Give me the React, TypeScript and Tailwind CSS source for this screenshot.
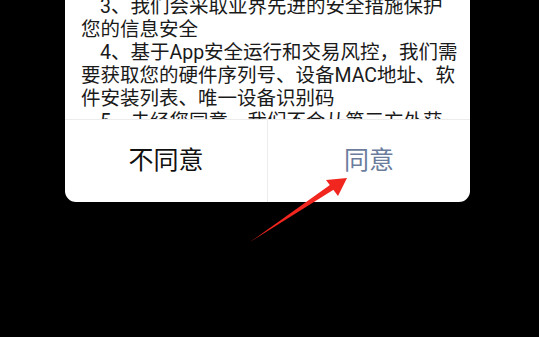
import React from 'react';

const lines: { text: string; indent?: boolean }[] = [
  { text: '3、我们会采取业界先进的安全措施保护', indent: true },
  { text: '您的信息安全' },
  { text: '4、基于App安全运行和交易风控，我们需', indent: true },
  { text: '要获取您的硬件序列号、设备MAC地址、软' },
  { text: '件安装列表、唯一设备识别码' },
  { text: '5、未经您同意，我们不会从第三方外获', indent: true },
];

const App: React.FC = () => {
  return (
    <div
      className="relative w-[539px] h-[337px] bg-black overflow-hidden"
      style={{ fontFamily: "Roboto, 'Noto Sans CJK SC', sans-serif" }}
    >
      {/* Dialog */}
      <div className="ml-[65px] w-[405px] bg-white rounded-b-[11px] overflow-hidden">
        {/* Scrolled agreement text */}
        <div className="h-[119px] overflow-hidden pl-[16px] pr-[14px]">
          <div className="-mt-[5px] text-[19.5px] leading-[23px] text-[#1a1a1a]">
            {lines.map((l, i) => (
              <div key={i} className={`whitespace-nowrap ${l.indent ? 'pl-[19px]' : ''}`}>
                {l.text}
              </div>
            ))}
          </div>
        </div>

        {/* Buttons */}
        <div className="flex h-[83px] border-t border-[#ececec]">
          <button className="flex-1 flex items-center justify-center text-[25px] text-[#111] pb-[1px]">
            不同意
          </button>
          <div className="w-px bg-[#ececec]" />
          <button className="flex-1 flex items-center justify-center text-[25px] text-[#6b7c9c] pb-[1px]">
            同意
          </button>
        </div>
      </div>

      {/* Red annotation arrow */}
      <svg
        className="absolute left-0 top-0 pointer-events-none"
        width="539"
        height="337"
        viewBox="0 0 539 337"
      >
        <path d="M250 242 L332 183.5 L335.5 188.5 Z" fill="#f0261f" />
        <path d="M347 178 L326 180 L338 196 Z" fill="#f0261f" />
      </svg>
    </div>
  );
};

export default App;
